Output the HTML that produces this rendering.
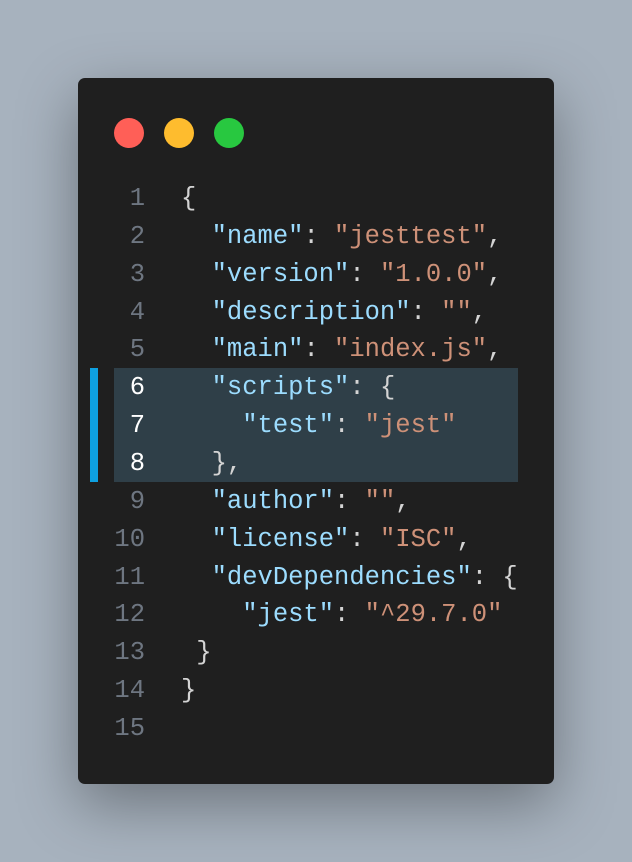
<!DOCTYPE html>
<html><head><style>
html,body{margin:0;padding:0;}
body{width:632px;height:862px;background:#a7b2be;position:relative;overflow:hidden;font-family:"Liberation Mono",monospace;}
.win{position:absolute;left:78px;top:78px;width:476px;height:706px;background:#1f1f1f;border-radius:7px;box-shadow:0 20px 60px rgba(0,0,0,.35);}
.dot{position:absolute;top:40px;width:30px;height:30px;border-radius:50%;}
.hl{position:absolute;left:36px;top:290px;width:404px;height:114px;background:#2f3f48;}
.bar{position:absolute;left:12px;top:290px;width:8px;height:114px;background:#0ea0e0;}
.code{position:absolute;left:0;top:102px;font-size:25.5px;line-height:37.86px;white-space:pre;}
.ln{position:absolute;left:0;width:67px;text-align:right;color:#6e7681;}
.tx{position:absolute;left:103px;color:#d4d4d4;}
.k{color:#9cdcfe}.s{color:#ce9178}.w{color:#fff}
</style></head><body>
<div class="win">
<div class="dot" style="left:36px;background:#ff5f57"></div>
<div class="dot" style="left:86px;background:#febc2e"></div>
<div class="dot" style="left:136px;background:#28c840"></div>
<div class="hl"></div><div class="bar"></div>
<div class="code"><div class="ln">1
2
3
4
5
<span class="w">6</span>
<span class="w">7</span>
<span class="w">8</span>
9
10
11
12
13
14
15</div><div class="tx">{
  <span class="k">"name"</span>: <span class="s">"jesttest"</span>,
  <span class="k">"version"</span>: <span class="s">"1.0.0"</span>,
  <span class="k">"description"</span>: <span class="s">""</span>,
  <span class="k">"main"</span>: <span class="s">"index.js"</span>,
  <span class="k">"scripts"</span>: {
    <span class="k">"test"</span>: <span class="s">"jest"</span>
  },
  <span class="k">"author"</span>: <span class="s">""</span>,
  <span class="k">"license"</span>: <span class="s">"ISC"</span>,
  <span class="k">"devDependencies"</span>: {
    <span class="k">"jest"</span>: <span class="s">"^29.7.0"</span>
 }
}
</div></div>
</div>
</body></html>
